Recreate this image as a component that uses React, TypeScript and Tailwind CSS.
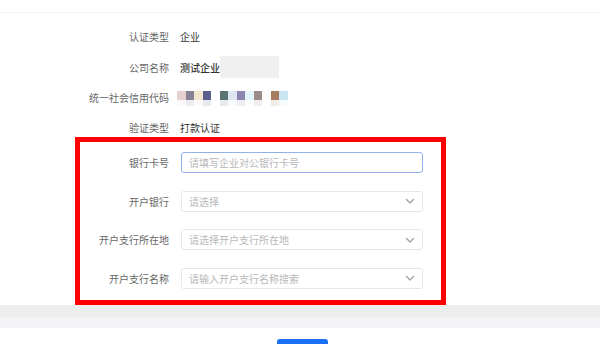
import React from 'react';

// 统一社会信用代码 打码色块
const mosaic = [
  '#e6cfcf', '#878096', '#f1e7cf', '#5b5f8e', '', '#5b7471', '#e0e5f2',
  '#8c86ae', '#e2f5fb', '#9b8b89', '', '#a77d61', '#c9e5f1',
];

const font = { fontFamily: '"Noto Sans CJK SC", "Noto Sans", sans-serif' };

function Chevron() {
  return (
    <svg width="10" height="10" viewBox="0 0 10 10" fill="none" className="shrink-0">
      <path d="M1.5 3.5 L5 7 L8.5 3.5" stroke="#9e9e9e" strokeWidth="1.2" strokeLinecap="round" strokeLinejoin="round" />
    </svg>
  );
}

function InfoRow({ label, children, className = '' }: { label: string; children: React.ReactNode; className?: string }) {
  return (
    <div className={`flex h-[20px] items-center ${className}`}>
      <div className="w-[169px] text-right text-[10px] text-[#666]">{label}</div>
      <div className="ml-[11px] flex items-center text-[10px] text-[#333]">{children}</div>
    </div>
  );
}

function FieldRow({ label, placeholder, select, active }: { label: string; placeholder: string; select?: boolean; active?: boolean }) {
  return (
    <div className="flex h-[21px] items-center">
      <div className="w-[89px] text-right text-[10px] text-[#666]">{label}</div>
      <div
        className={`ml-[12px] flex h-full w-[242px] items-center justify-between rounded-[3px] border bg-white pl-[7px] pr-[7px] ${
          active ? 'border-[#8fb1ee]' : 'border-[#e6e6e6]'
        }`}
      >
        <span className="text-[10px] text-[#b8b8b8]">{placeholder}</span>
        {select && <Chevron />}
      </div>
    </div>
  );
}

export default function App() {
  return (
    <div className="h-[344px] w-[600px] overflow-hidden bg-white" style={font}>
      {/* 顶部分割线 */}
      <div className="h-[13px] border-b border-[#f2f2f2]" />

      <InfoRow label="认证类型" className="mt-[13px]">企业</InfoRow>
      <InfoRow label="公司名称" className="mt-[11px]">
        <span className="font-medium text-[#333]">测试企业</span>
        <span className="h-[22px] w-[59px] bg-[#f0f0f0]" />
      </InfoRow>
      <InfoRow label="统一社会信用代码" className="mt-[10px]">
        <div className="-ml-[3px] flex pt-[2px]">
          {mosaic.map((c, i) => (
            <div key={i} className="flex w-[8.5px] flex-col">
              <div className="h-[9px]" style={{ backgroundColor: c || 'transparent' }} />
              <div className="h-[6px] opacity-15" style={{ backgroundColor: c || 'transparent' }} />
            </div>
          ))}
        </div>
      </InfoRow>
      <InfoRow label="验证类型" className="mt-[10px]">打款认证</InfoRow>

      {/* 红框标注区域 */}
      <div className="ml-[75px] flex w-[371px] flex-col gap-[17.5px] border-[5px] border-[#ff0000] pb-[11.5px] pt-[10px]">
        <FieldRow label="银行卡号" placeholder="请填写企业对公银行卡号" active />
        <FieldRow label="开户银行" placeholder="请选择" select />
        <FieldRow label="开户支行所在地" placeholder="请选择开户支行所在地" select />
        <FieldRow label="开户支行名称" placeholder="请输入开户支行名称搜索" select />
      </div>

      {/* 底部灰色区 */}
      <div className="h-[12px] bg-[#ededed]" />
      <div className="h-[11px] bg-[#f4f4f7]" />

      <div className="flex justify-center pt-[11px]">
        <button className="ml-[5px] h-[28px] w-[51px] rounded-[3px] bg-[#1b6ff5]" />
      </div>
    </div>
  );
}
